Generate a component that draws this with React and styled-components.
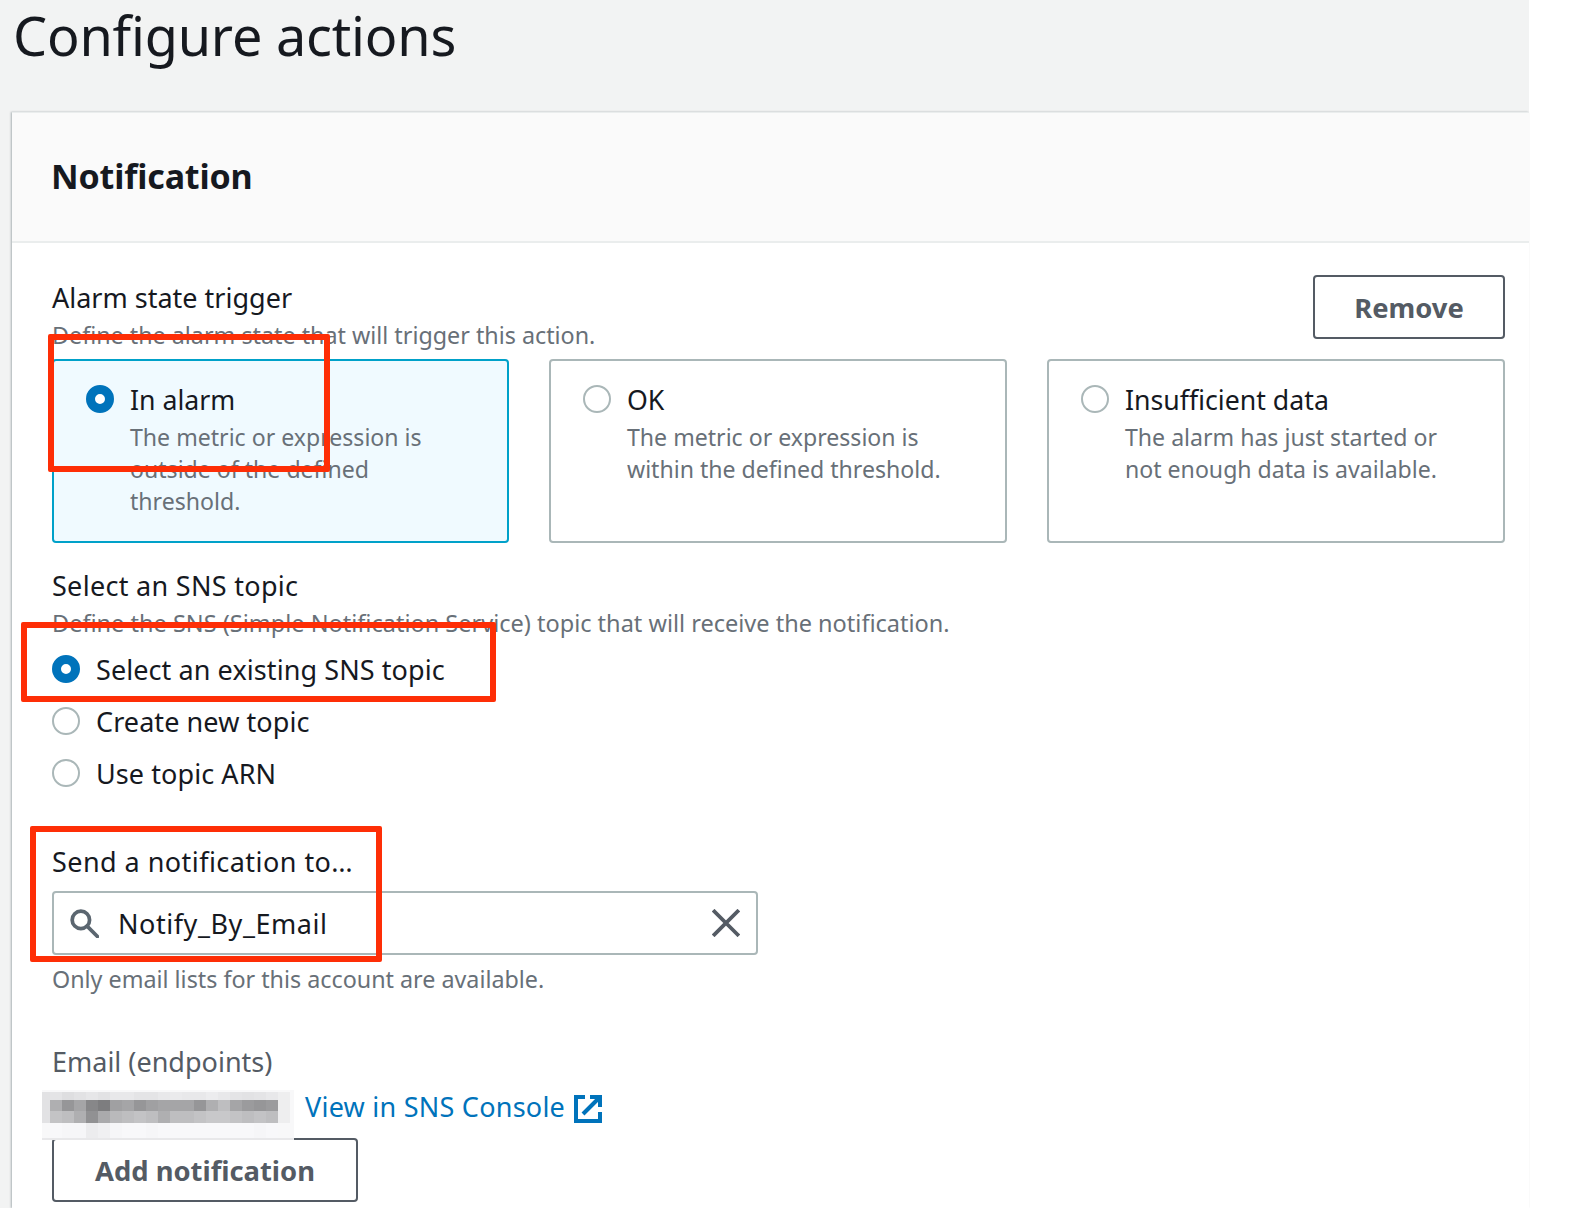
import React from "react";
import styled, { createGlobalStyle } from "styled-components";

const Global = createGlobalStyle`
  html, body { margin: 0; padding: 0; background: #fff; }
  body { font-family: "Noto Sans", "Open Sans", "Liberation Sans", sans-serif; color: #16191f; }
`;
const Page = styled.div`position: relative; width: 1570px; height: 1208px; overflow: hidden; background: #fff;`;
const Shell = styled.div`width: 1529px; height: 1208px; background: #f2f3f3; display: flex; flex-direction: column;`;
const PageHeader = styled.header`height: 112px; padding-left: 13px; flex: none;`;
const PageTitle = styled.h1`margin: 0; font-size: 54px; line-height: 71px; font-weight: 400; letter-spacing: -0.2px; color: #16191f;`;
const Card = styled.section`margin-left: 12px; flex: 1; background: #fff; border-top: 1px solid #eaeded; box-shadow: -1px 0 2px rgba(0,28,36,.3); display: flex; flex-direction: column;`;
const CardHeader = styled.div`height: 130px; flex: none; box-sizing: border-box; background: #fafafa; border-bottom: 2px solid #eaeded; padding: 0 0 2px 39px; display: flex; align-items: center;`;
const CardTitle = styled.h2`margin: 0; font-size: 34px; line-height: 44px; font-weight: 700; letter-spacing: -0.15px; color: #16191f;`;
const CardBody = styled.div`padding: 31px 24px 0 40px; display: flex; flex-direction: column;`;
const FieldHead = styled.div`display: flex; justify-content: space-between; align-items: flex-start; height: 85px;`;
const Label = styled.div`font-size: 27px; line-height: 36px; letter-spacing: ${p => p.$ls || 0}px; color: ${p => p.$muted ? "#545b64" : "#16191f"};`;
const Hint = styled.div`font-size: ${p => p.$fs || 23.3}px; line-height: 32px; color: #687078; margin-top: ${p => p.$mt || 0}px;`;
const HeadText = styled.div`padding-top: 6px;`;
const Button = styled.button`box-sizing: border-box; width: ${p => p.$w}px; height: 64px; flex: none; margin-top: ${p => p.$mt}px; background: #fff; border: 2px solid #545b64; border-radius: 4px; padding: 2px 0 0; font: 700 27.4px/1 "Noto Sans", sans-serif; color: #545b64;`;
const Tiles = styled.div`display: grid; grid-template-columns: 457px 458px 458px; column-gap: 40px;`;
const Tile = styled.div`box-sizing: border-box; height: 184px; border: 2px solid ${p => p.$on ? "#00a1c9" : "#aab7b8"}; border-radius: 4px; background: ${p => p.$on ? "#f0faff" : "#fff"}; padding: 23px 32px; display: flex; gap: 16px; align-items: flex-start;`;
const Radio = styled.span`box-sizing: border-box; display: block; flex: none; width: 28px; height: 28px; border-radius: 50%; background: #fff; border: ${p => p.$on ? "9px solid #0073bb" : "2px solid #aab7b8"};`;
const TileRadio = styled(Radio)`margin-top: 1px;`;
const TileText = styled.div`display: flex; flex-direction: column;`;
const TileLabel = styled.div`font-size: 26.7px; line-height: 32px; color: #16191f; margin-bottom: 5px;`;
const TileDesc = styled.div`font-size: 23.1px; line-height: 32px; color: #687078; width: 330px;`;
const Section = styled.div`margin-top: ${p => p.$mt}px;`;
const RadioList = styled.div`display: flex; flex-direction: column; margin-top: 4px;`;
const RadioRow = styled.div`height: 52px; display: flex; align-items: center; gap: 16px; font-size: 27px; letter-spacing: 0.08px; color: #16191f;`;
const Input = styled.div`box-sizing: border-box; width: 706px; height: 64px; margin-top: 11px; border: 2px solid #aab7b8; border-radius: 4px; display: flex; align-items: center; padding: 0 16px; font-size: 27px; letter-spacing: 0.55px; color: #16191f;`;
const InputValue = styled.span`flex: 1; margin-left: 19px;`;
const EmailRow = styled.div`height: 52px; display: flex; align-items: center; padding-left: 253px; font-size: 27px;`;
const Link = styled.a`color: #0073bb; display: flex; align-items: center; gap: 9px; letter-spacing: 0.24px;`;
const ExternalSvg = styled.svg`margin-top: 6px;`;
const Frame = styled.div`position: absolute; box-sizing: border-box; border: 6px solid #fe2e06; border-radius: 2px; left: ${p => p.$x}px; top: ${p => p.$y}px; width: ${p => p.$w}px; height: ${p => p.$h}px;`;
const Mosaic = styled.svg`position: absolute; left: 42px; top: 1090px;`;

const Search = () => (
  <svg width="29" height="29" viewBox="0 0 28 28" fill="none" stroke="#5b6670" strokeWidth="3.6">
    <circle cx="10.5" cy="10.5" r="8.4" /><path d="M16.5 16.5 L26.5 26.5" strokeLinecap="round" />
  </svg>
);
const Close = () => (
  <svg width="28" height="28" viewBox="0 0 28 28" fill="none" stroke="#545b64" strokeWidth="3.8" strokeLinecap="square">
    <path d="M2.5 2.5 L25.5 25.5 M25.5 2.5 L2.5 25.5" />
  </svg>
);
const External = () => (
  <ExternalSvg width="28" height="28" viewBox="0 0 28 28" fill="none" stroke="#0073bb" strokeWidth="4">
    <path d="M11 2 H2 V26 H26 V17" /><path d="M9 19 L24 4" /><path d="M16 2 H26 V12" />
  </ExternalSvg>
);

const row2 = [175,150,165,135,125,160,165,150,160,165,165,165,150,175,190,165,155,150,155];
const row3 = [195,190,175,145,170,185,190,195,190,175,190,190,195,200,200,195,190,195,190];
const row1 = [228,222,226,230,226,232,232,228,228,232,234,232,232,236,232,228,226,228,232];
const row4 = [248,246,246,236,240,246,248,248,246,248,248,248,248,248,248,248,248,246,248];
const grey = v => `rgb(${v},${v},${v + 2})`;

export default function App() {
  return (
    <Page>
      <Global />
      <Shell>
        <PageHeader><PageTitle>Configure actions</PageTitle></PageHeader>
        <Card>
          <CardHeader><CardTitle>Notification</CardTitle></CardHeader>
          <CardBody>
            <FieldHead>
              <HeadText>
                <Label>Alarm state trigger</Label>
                <Hint $mt={3}>Define the alarm state that will trigger this action.</Hint>
              </HeadText>
              <Button $w={192} $mt={1}>Remove</Button>
            </FieldHead>
            <Tiles>
              <Tile $on><TileRadio $on /><TileText><TileLabel>In alarm</TileLabel><TileDesc>The metric or expression is outside of the defined threshold.</TileDesc></TileText></Tile>
              <Tile><TileRadio /><TileText><TileLabel>OK</TileLabel><TileDesc>The metric or expression is within the defined threshold.</TileDesc></TileText></Tile>
              <Tile><TileRadio /><TileText><TileLabel>Insufficient data</TileLabel><TileDesc>The alarm has just started or not enough data is available.</TileDesc></TileText></Tile>
            </Tiles>
            <Section $mt={25}>
              <Label $ls={0.3}>Select an SNS topic</Label>
              <Hint $mt={3} $fs={23.52}>Define the SNS (Simple Notification Service) topic that will receive the notification.</Hint>
              <RadioList>
                <RadioRow><Radio $on />Select an existing SNS topic</RadioRow>
                <RadioRow><Radio />Create new topic</RadioRow>
                <RadioRow><Radio />Use topic ARN</RadioRow>
              </RadioList>
            </Section>
            <Section $mt={45}>
              <Label $ls={0.45}>Send a notification to…</Label>
              <Input><Search /><InputValue>Notify_By_Email</InputValue><Close /></Input>
              <Hint $mt={8}>Only email lists for this account are available.</Hint>
            </Section>
            <Section $mt={49}>
              <Label $muted>Email (endpoints)</Label>
              <EmailRow><Link>View in SNS Console <External /></Link></EmailRow>
              <Button $w={306} $mt={6}>Add notification</Button>
            </Section>
          </CardBody>
        </Card>
      </Shell>
      <Frame $x={48} $y={334} $w={282} $h={138} />
      <Frame $x={21} $y={622} $w={475} $h={80} />
      <Frame $x={30} $y={826} $w={352} $h={136} />
      <Mosaic width="252" height="52" shapeRendering="crispEdges">
        <rect x="0" y="0" width="252" height="49" fill="#f8f8f9" />
        <rect x="0" y="2" width="8" height="31" fill="#e2e2e4" />
        <rect x="236" y="2" width="12" height="31" fill="#eeeeef" />
        {row1.map((v, i) => <rect key={i} x={i * 12 + 8} y="2" width="12" height="8" fill={grey(v)} />)}
        {row2.map((v, i) => <rect key={i} x={i * 12 + 8} y="10" width="12" height="11" fill={grey(v)} />)}
        {row3.map((v, i) => <rect key={i} x={i * 12 + 8} y="21" width="12" height="12" fill={grey(v)} />)}
        {row4.map((v, i) => <rect key={i} x={i * 12 + 8} y="33" width="12" height="15" fill={grey(v)} />)}
        <rect x="0" y="48" width="252" height="2" fill="#e8e8ea" />
      </Mosaic>
    </Page>
  );
}
